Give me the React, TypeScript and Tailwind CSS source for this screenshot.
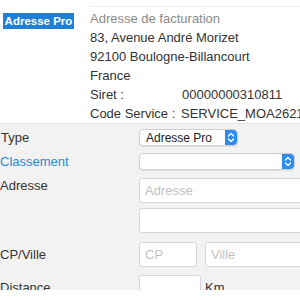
import React from 'react';

const Stepper: React.FC = () => (
  <span className="flex h-full w-[12px] items-center justify-center rounded-r-[4px] bg-[#2d8cf0]">
    <svg width="8" height="11" viewBox="0 0 8 11" fill="none" stroke="white" strokeWidth="1.3" strokeLinecap="round" strokeLinejoin="round">
      <path d="M1.5 4 L4 1.5 L6.5 4" />
      <path d="M1.5 7 L4 9.5 L6.5 7" />
    </svg>
  </span>
);

const Select: React.FC<{ value?: string; width: string }> = ({ value, width }) => (
  <div className={`flex h-[17px] items-center justify-between rounded-[4px] border border-[#d0d0d0] bg-white shadow-[0_1px_1px_rgba(0,0,0,0.08)] ${width}`}>
    <span className="pl-[6px] text-[12px] leading-none text-[#222]">{value}</span>
    <Stepper />
  </div>
);

const Input: React.FC<{ placeholder?: string; className: string }> = ({ placeholder, className }) => (
  <div className={`flex h-[25px] shrink-0 items-center rounded-[3px] border border-[#d6d6d6] bg-white pl-[5px] text-[13px] text-[#c2c2c2] ${className}`}>
    {placeholder}
  </div>
);

export default function App() {
  return (
    <div className="h-[300px] w-[300px] overflow-hidden bg-white font-['Liberation_Sans',Arial,sans-serif] text-[13px] text-[#333]">
      {/* Billing address */}
      <div className="flex h-[123px]">
        <div className="w-[90px] shrink-0 pl-[3px] pt-[11px]">
          <span className="inline-block h-[16px] w-[71px] bg-[#1f7fd6] text-center text-[11.5px] font-bold leading-[16px] text-white">
            Adresse Pro
          </span>
        </div>
        <div className="mt-[6px] flex-1 whitespace-nowrap border-t border-[#ececec] pt-[2px] leading-[19px]">
          <div className="text-[#8a8a8a]">Adresse de facturation</div>
          <div>83, Avenue André Morizet</div>
          <div>92100 Boulogne-Billancourt</div>
          <div>France</div>
          <div className="flex">
            <span className="w-[92px] shrink-0">Siret :</span>
            <span>00000000310811</span>
          </div>
          <div className="flex">
            <span className="w-[91px] shrink-0">Code Service :</span>
            <span>SERVICE_MOA26214</span>
          </div>
        </div>
      </div>

      {/* Form */}
      <div className="h-[167px] overflow-hidden border-t border-[#e2e2e2] bg-[#f2f2f2] pt-[5px] text-[13px] leading-[17px] text-[#333]">
        <div className="flex items-center">
          <span className="w-[139px] shrink-0 pl-[1px]">Type</span>
          <Select value="Adresse Pro" width="w-[99px]" />
        </div>
        <div className="mt-[7px] flex items-center">
          <span className="w-[139px] shrink-0 text-[#2a8ad6]">Classement</span>
          <Select width="w-[156px]" />
        </div>
        <div className="mt-[8px] flex items-start">
          <span className="w-[139px] shrink-0 leading-[16px]">Adresse</span>
          <Input placeholder="Adresse" className="w-[170px]" />
        </div>
        <div className="mt-[5px] flex">
          <span className="w-[139px] shrink-0" />
          <Input className="w-[170px]" />
        </div>
        <div className="mt-[9px] flex items-center">
          <span className="w-[139px] shrink-0">CP/Ville</span>
          <Input placeholder="CP" className="w-[58px]" />
          <Input placeholder="Ville" className="ml-[8px] w-[110px]" />
        </div>
        <div className="mt-[8px] flex items-center">
          <span className="w-[139px] shrink-0">Distance</span>
          <Input className="w-[62px]" />
          <span className="ml-[4px]">Km</span>
        </div>
      </div>
    </div>
  );
}
